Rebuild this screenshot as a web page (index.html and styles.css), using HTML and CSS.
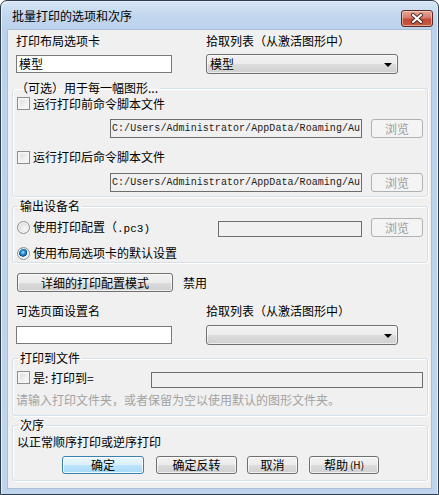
FILE: index.html
```html
<!DOCTYPE html>
<html lang="zh-CN">
<head>
<meta charset="utf-8">
<title>批量打印的选项和次序</title>
<link rel="stylesheet" href="styles.css">
</head>
<body>
<div class="window">
  <div class="titlebar">
    <span class="title">批量打印的选项和次序</span>
    <div class="close">
      <svg width="14" height="11" viewBox="0 0 14 11">
        <path d="M3 2 L11 9 M11 2 L3 9" stroke="#4a2a26" stroke-width="4" stroke-linecap="round" fill="none"/>
        <path d="M3 2 L11 9 M11 2 L3 9" stroke="#ffffff" stroke-width="2.2" stroke-linecap="round" fill="none"/>
      </svg>
    </div>
  </div>
  <div class="client">
    <div class="grid-row labels">
      <span>打印布局选项卡</span>
      <span>拾取列表（从激活图形中）</span>
    </div>
    <div class="grid-row inputs">
      <div class="textbox">模型</div>
      <div class="combo"><span>模型</span><span class="arrow"></span></div>
    </div>

    <fieldset class="group g1">
      <legend>（可选）用于每一幅图形...</legend>
      <div class="check-row first"><span class="checkbox"></span><span>运行打印前命令脚本文件</span></div>
      <div class="path-row">
        <div class="pathbox">C:/Users/Administrator/AppData/Roaming/Au</div>
        <div class="btn disabled browse">浏览</div>
      </div>
      <div class="check-row second"><span class="checkbox"></span><span>运行打印后命令脚本文件</span></div>
      <div class="path-row">
        <div class="pathbox">C:/Users/Administrator/AppData/Roaming/Au</div>
        <div class="btn disabled browse">浏览</div>
      </div>
    </fieldset>

    <fieldset class="group g2">
      <legend>输出设备名</legend>
      <div class="radio-row first">
        <span class="radio"></span><span>使用打印配置（<span class="mono">.pc3)</span></span>
        <div class="pc3box"></div>
        <div class="btn disabled browse">浏览</div>
      </div>
      <div class="radio-row second">
        <span class="radio checked"></span><span>使用布局选项卡的默认设置</span>
      </div>
    </fieldset>

    <div class="detail-row">
      <div class="btn detail">详细的打印配置模式</div>
      <span>禁用</span>
    </div>

    <div class="grid-row labels labels2">
      <span>可选页面设置名</span>
      <span>拾取列表（从激活图形中）</span>
    </div>
    <div class="grid-row inputs inputs2">
      <div class="textbox"></div>
      <div class="combo"><span></span><span class="arrow"></span></div>
    </div>

    <fieldset class="group g3">
      <legend>打印到文件</legend>
      <div class="file-row">
        <span class="checkbox"></span><span class="file-label">是: 打印到=</span>
        <div class="filebox"></div>
      </div>
      <div class="hint">请输入打印文件夹，或者保留为空以使用默认的图形文件夹。</div>
    </fieldset>

    <fieldset class="group g4">
      <legend>次序</legend>
      <div class="order-text">以正常顺序打印或逆序打印</div>
      <div class="buttons">
        <div class="btn default b-ok">确定</div>
        <div class="btn b-rev">确定反转</div>
        <div class="btn b-cancel">取消</div>
        <div class="btn b-help">帮助<span class="small">(H)</span></div>
      </div>
    </fieldset>
  </div>
</div>
</body>
</html>
```

FILE: styles.css
```css
html, body {
  margin: 0;
  padding: 0;
  background: #ffffff;
}
body {
  font-family: "Noto Sans CJK SC", "Microsoft YaHei", sans-serif;
  font-size: 12px;
  line-height: 14px;
  color: #000;
}
.window {
  width: 439px;
  height: 495px;
  box-sizing: border-box;
  border: 1px solid #2f3d4c;
  border-radius: 7px 7px 0 0;
  background: linear-gradient(180deg, #d6e6f6 0px, #c3d8ee 14px, #bad2ec 29px, #bfd5ed 100%);
  box-shadow: inset 1px 1px 0 #e6f0fa, inset -1px 0 0 #e6f0fa;
  display: flex;
  flex-direction: column;
  padding: 0 7px 6px 7px;
}
.titlebar {
  height: 29px;
  display: flex;
  align-items: flex-start;
  justify-content: space-between;
  flex-shrink: 0;
}
.title {
  margin: 7px 0 0 4px;
  line-height: 16px;
  color: #000;
}
.close {
  margin: 9px -2px 0 0;
  width: 30px;
  height: 15px;
  border: 1px solid #5a2a25;
  border-radius: 3px;
  background: linear-gradient(180deg, #e9a99b 0%, #d67b69 45%, #c24a36 55%, #c65a44 100%);
  box-shadow: inset 0 0 0 1px rgba(255, 220, 210, 0.55);
  display: flex;
  align-items: center;
  justify-content: center;
}
.client {
  flex: 1;
  background: #f0f0f0;
  padding: 0 3px 0 4px;
  display: flex;
  flex-direction: column;
  box-shadow: 0 0 0 1px #a9bfd6;
}
.grid-row {
  display: grid;
  grid-template-columns: 190px 1fr;
  padding-left: 4px;
  align-items: center;
}
.labels { height: 22px; }
.inputs { height: 24px; }
.labels2 { margin-top: 9px; height: 20px; }
.inputs2 { margin-top: 3px; height: 22px; }

.textbox {
  width: 156px;
  height: 18px;
  box-sizing: border-box;
  border: 1px solid #7a7a7a;
  background: #fff;
  padding-left: 2px;
  line-height: 16px;
}
.combo {
  width: 192px;
  height: 20px;
  box-sizing: border-box;
  border: 1px solid #707070;
  border-radius: 3px;
  background: linear-gradient(180deg, #f2f2f2 0%, #ebebeb 50%, #dddddd 50%, #cfcfcf 100%);
  box-shadow: inset 0 0 0 1px rgba(255, 255, 255, 0.6);
  display: flex;
  align-items: center;
  justify-content: space-between;
  padding: 0 5px 0 3px;
  line-height: 16px;
}
.arrow {
  width: 0;
  height: 0;
  border-left: 4px solid transparent;
  border-right: 4px solid transparent;
  border-top: 4px solid #000;
  margin-top: 1px;
}

.group {
  margin: 5px 0 0 0;
  padding: 0 4px 4px 4px;
  border: 1px solid #d5dfe5;
  border-radius: 3px;
  min-width: 0;
  box-shadow: 1px 1px 0 #ffffff, inset 1px 1px 0 #ffffff;
}
.group legend {
  padding: 0 2px;
  margin-left: 1px;
  line-height: 14px;
  height: 14px;
}
.g1 legend { margin-left: -3px; }
.g2 { margin-top: 2px; padding-bottom: 1px; }
.g3 { margin-top: 5px; padding-bottom: 8px; }
.g4 { margin-top: 2px; padding-bottom: 6px; }

.check-row, .radio-row {
  display: flex;
  align-items: center;
  height: 16px;
}
.check-row > .checkbox, .radio-row > .radio { margin-right: 3px; }
.check-row.first { margin-top: 1px; height: 15px; }
.check-row.second { margin-top: 11px; }

.checkbox {
  width: 13px;
  height: 13px;
  box-sizing: border-box;
  border: 1px solid #8e8f8f;
  background: linear-gradient(135deg, #d2d4d8 0%, #f0f0f0 60%, #fafafa 100%);
  box-shadow: inset 0 0 0 2px #f4f4f4;
  flex-shrink: 0;
}
.radio {
  width: 13px;
  height: 13px;
  box-sizing: border-box;
  border-radius: 50%;
  border: 1px solid #8e8f8f;
  background: radial-gradient(circle at 60% 60%, #fafafa 0%, #e2e2e2 55%, #cfcfcf 100%);
  box-shadow: inset 0 0 0 1px #f6f6f6;
  flex-shrink: 0;
}
.radio.checked {
  background:
    radial-gradient(circle at 45% 40%, #b8e4ff 0px, #2c8fd8 2px, #0c4c96 4px, transparent 4.5px),
    radial-gradient(circle, #f6f6f6 0%, #dedede 100%);
}

.path-row {
  display: flex;
  justify-content: flex-end;
  gap: 9px;
  margin-top: 8px;
  height: 19px;
}
.pathbox {
  width: 252px;
  height: 19px;
  box-sizing: border-box;
  border: 1px solid #6d6d6d;
  background: #f0f0f0;
  font-family: "Liberation Mono", "DejaVu Sans Mono", monospace;
  font-size: 10px;
  letter-spacing: 0.05px;
  line-height: 17px;
  padding-left: 1px;
  color: #222;
  white-space: nowrap;
  overflow: hidden;
}
.btn {
  box-sizing: border-box;
  border: 1px solid #707070;
  border-radius: 3px;
  background: linear-gradient(180deg, #f2f2f2 0%, #ebebeb 50%, #dddddd 50%, #cfcfcf 100%);
  box-shadow: inset 0 0 0 1px rgba(255, 255, 255, 0.7);
  display: flex;
  align-items: center;
  justify-content: center;
  line-height: 14px;
}
.btn.disabled {
  border-color: #adb2b5;
  background: #f4f4f4;
  color: #9c9c9c;
  box-shadow: none;
}
.btn.default {
  border-color: #3c7fb1;
  background: linear-gradient(180deg, #eaf6fd 0%, #d9f0fc 50%, #bee6fd 50%, #a7d9f5 100%);
  box-shadow: inset 0 0 0 1px rgba(255, 255, 255, 0.8);
}
.browse {
  width: 52px;
  height: 19px;
}

.radio-row.first {
  margin-top: 5px;
  height: 19px;
}
.radio-row.second { margin-top: 8px; }
.mono {
  font-family: "Liberation Mono", "DejaVu Sans Mono", monospace;
  font-size: 11px;
}
.pc3box {
  margin-left: auto;
  align-self: flex-end;
  width: 144px;
  height: 16px;
  box-sizing: border-box;
  border: 1px solid #6d6d6d;
  background: #f0f0f0;
  margin-right: 9px;
}

.detail-row {
  display: flex;
  align-items: center;
  margin: 10px 0 0 5px;
  height: 19px;
}
.detail {
  width: 156px;
  height: 19px;
  margin-right: 10px;
}

.file-row {
  display: flex;
  align-items: flex-start;
  margin-top: 6px;
  height: 17px;
}
.file-row .checkbox { margin-right: 3px; }
.file-label { line-height: 13px; }
.filebox {
  margin-left: auto;
  margin-top: 1px;
  width: 272px;
  height: 16px;
  box-sizing: border-box;
  border: 1px solid #6d6d6d;
  background: #f0f0f0;
}
.hint {
  margin: 5px 0 0 -1px;
  color: #a3a3a3;
  white-space: nowrap;
}

.order-text { margin-top: 3px; }
.buttons {
  display: flex;
  margin-top: 7px;
  height: 18px;
}
.buttons .btn { height: 18px; }
.b-ok { width: 82px; margin-left: 45px; }
.b-rev { width: 81px; margin-left: 12px; }
.b-cancel { width: 51px; margin-left: 10px; }
.b-help { width: 70px; margin-left: 11px; }
.small { font-size: 10px; margin-left: 2px; }
```
